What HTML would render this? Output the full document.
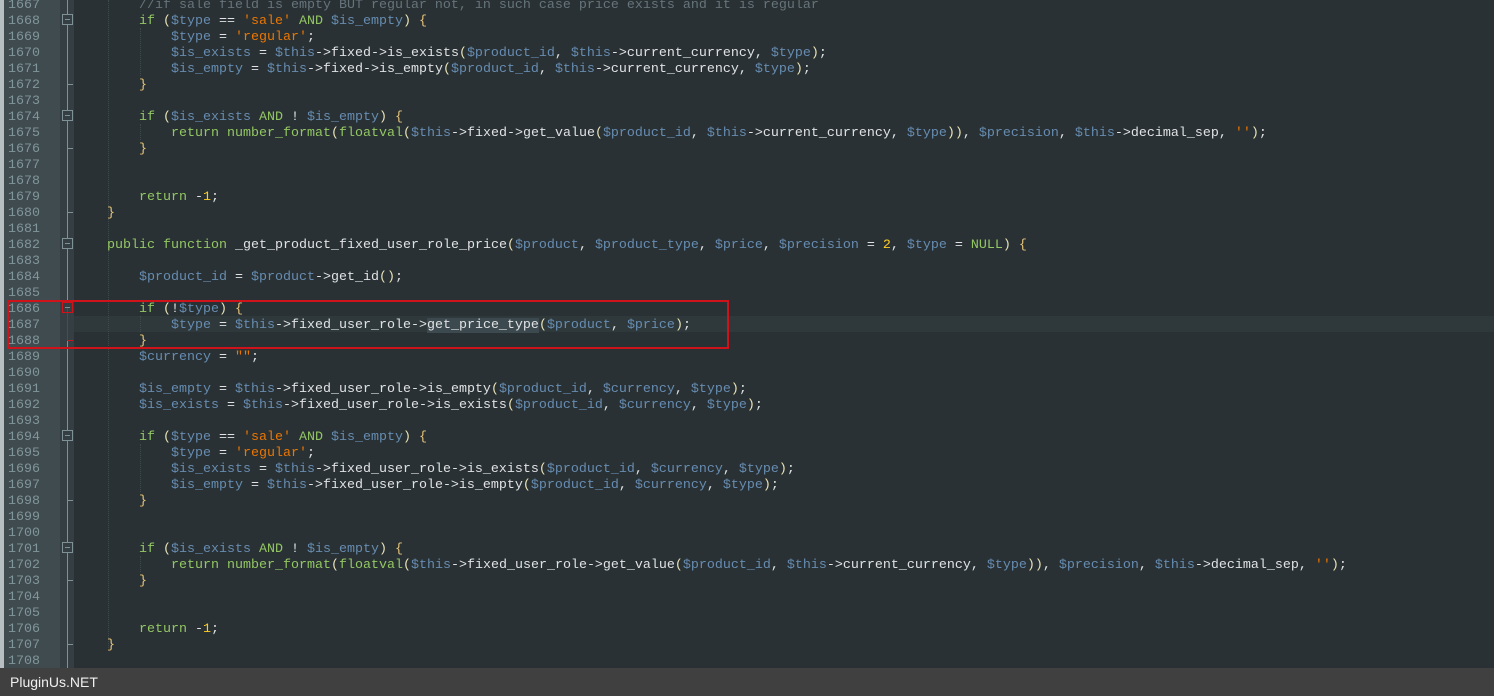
<!DOCTYPE html>
<html><head><meta charset="utf-8"><style>
html,body{margin:0;padding:0;width:1494px;height:696px;overflow:hidden;background:#293134;}
#g{position:absolute;left:0;top:0;width:60px;height:668px;background:#3f4b4f;}
#edge{position:absolute;left:0;top:0;width:4px;height:668px;background:#b8bfc2;}
#f{position:absolute;left:60px;top:0;width:14px;height:668px;background:#353f43;}
#fl{position:absolute;left:67px;top:0;width:1px;height:668px;background:#7d9196;}
.ln{position:absolute;left:8px;width:34px;height:16px;line-height:16px;margin-top:2px;font:13.33px "Liberation Mono",monospace;color:#81969a;}
.l{position:absolute;left:75px;height:16px;line-height:16px;margin-top:2px;font:13.33px "Liberation Mono",monospace;color:#e0e2e4;white-space:pre;}
.k{color:#93c763}.v{color:#678cb1}.s{color:#ec7600}.n{color:#ffcd22}.c{color:#66747b}.p{color:#e8e2b7}.b{color:#e8c47a}
.box{position:absolute;left:62px;width:9px;height:9px;border:1px solid #7d9196;background:#353f43;}
.box:after{content:"";position:absolute;left:2px;top:4px;width:5px;height:1px;background:#7d9196;}
.tk{position:absolute;left:67px;width:6px;height:1px;background:#7d9196;}
.guide{position:absolute;width:0;border-left:1px dotted #3e4a4e;}
#cur{position:absolute;left:74px;top:316px;width:1420px;height:16px;background:#2f393c;}
#red{position:absolute;left:7px;top:300px;width:718px;height:45px;border:2px solid #d0131a;}
#foot{position:absolute;left:0;top:668px;width:1494px;height:28px;background:#404040;color:#f0f0f0;font:14px "Liberation Sans",sans-serif;line-height:28px;padding-left:10px;box-sizing:border-box;}
.sel{background:#3c4a4f}
</style></head><body>
<div id="g"></div><div id="edge"></div><div id="f"></div><div id="fl"></div>
<div id="cur"></div>
<div class="guide" style="left:108px;top:0;height:648px"></div>
<div class="guide" style="left:140px;top:28px;height:48px"></div>
<div class="guide" style="left:140px;top:124px;height:16px"></div>
<div class="guide" style="left:140px;top:316px;height:16px"></div>
<div class="guide" style="left:140px;top:444px;height:48px"></div>
<div class="guide" style="left:140px;top:556px;height:16px"></div>
<div class="box" style="top:14px"></div>
<div class="box" style="top:110px"></div>
<div class="box" style="top:238px"></div>
<div class="box" style="top:302px;border-color:#d0131a"></div>
<div class="box" style="top:430px"></div>
<div class="box" style="top:542px"></div>
<div class="tk" style="top:84px"></div>
<div class="tk" style="top:148px"></div>
<div class="tk" style="top:212px"></div>
<div class="tk" style="top:340px;background:#d0131a"></div>
<div class="tk" style="top:500px"></div>
<div class="tk" style="top:580px"></div>
<div class="tk" style="top:644px"></div>
<div id="red"></div>
<div style="position:absolute;left:67px;top:308px;width:1px;height:32px;background:#d0131a"></div>

<div class="ln" style="top:-4px">1667</div><div class="l" style="top:-4px">        <span class="c">//if sale field is empty BUT regular not, in such case price exists and it is regular</span></div>
<div class="ln" style="top:12px">1668</div><div class="l" style="top:12px">        <span class="k">if</span> <span class="p">(</span><span class="v">$type</span> == <span class="s">'sale'</span> <span class="k">AND</span> <span class="v">$is_empty</span><span class="p">)</span> <span class="b">{</span></div>
<div class="ln" style="top:28px">1669</div><div class="l" style="top:28px">            <span class="v">$type</span> = <span class="s">'regular'</span>;</div>
<div class="ln" style="top:44px">1670</div><div class="l" style="top:44px">            <span class="v">$is_exists</span> = <span class="v">$this</span>->fixed->is_exists<span class="p">(</span><span class="v">$product_id</span>, <span class="v">$this</span>->current_currency, <span class="v">$type</span><span class="p">)</span>;</div>
<div class="ln" style="top:60px">1671</div><div class="l" style="top:60px">            <span class="v">$is_empty</span> = <span class="v">$this</span>->fixed->is_empty<span class="p">(</span><span class="v">$product_id</span>, <span class="v">$this</span>->current_currency, <span class="v">$type</span><span class="p">)</span>;</div>
<div class="ln" style="top:76px">1672</div><div class="l" style="top:76px">        <span class="b">}</span></div>
<div class="ln" style="top:92px">1673</div>
<div class="ln" style="top:108px">1674</div><div class="l" style="top:108px">        <span class="k">if</span> <span class="p">(</span><span class="v">$is_exists</span> <span class="k">AND</span> ! <span class="v">$is_empty</span><span class="p">)</span> <span class="b">{</span></div>
<div class="ln" style="top:124px">1675</div><div class="l" style="top:124px">            <span class="k">return</span> <span class="k">number_format</span><span class="p">(</span><span class="k">floatval</span><span class="p">(</span><span class="v">$this</span>->fixed->get_value<span class="p">(</span><span class="v">$product_id</span>, <span class="v">$this</span>->current_currency, <span class="v">$type</span><span class="p">))</span>, <span class="v">$precision</span>, <span class="v">$this</span>->decimal_sep, <span class="s">''</span><span class="p">)</span>;</div>
<div class="ln" style="top:140px">1676</div><div class="l" style="top:140px">        <span class="b">}</span></div>
<div class="ln" style="top:156px">1677</div>
<div class="ln" style="top:172px">1678</div>
<div class="ln" style="top:188px">1679</div><div class="l" style="top:188px">        <span class="k">return</span> -<span class="n">1</span>;</div>
<div class="ln" style="top:204px">1680</div><div class="l" style="top:204px">    <span class="b">}</span></div>
<div class="ln" style="top:220px">1681</div>
<div class="ln" style="top:236px">1682</div><div class="l" style="top:236px">    <span class="k">public</span> <span class="k">function</span> _get_product_fixed_user_role_price<span class="p">(</span><span class="v">$product</span>, <span class="v">$product_type</span>, <span class="v">$price</span>, <span class="v">$precision</span> = <span class="n">2</span>, <span class="v">$type</span> = <span class="k">NULL</span><span class="p">)</span> <span class="b">{</span></div>
<div class="ln" style="top:252px">1683</div>
<div class="ln" style="top:268px">1684</div><div class="l" style="top:268px">        <span class="v">$product_id</span> = <span class="v">$product</span>->get_id<span class="p">()</span>;</div>
<div class="ln" style="top:284px">1685</div>
<div class="ln" style="top:300px">1686</div><div class="l" style="top:300px">        <span class="k">if</span> <span class="p">(</span>!<span class="v">$type</span><span class="p">)</span> <span class="b">{</span></div>
<div class="ln" style="top:316px">1687</div><div class="l" style="top:316px">            <span class="v">$type</span> = <span class="v">$this</span>->fixed_user_role-><span class="sel">get_price_type</span><span class="p">(</span><span class="v">$product</span>, <span class="v">$price</span><span class="p">)</span>;</div>
<div class="ln" style="top:332px">1688</div><div class="l" style="top:332px">        <span class="b">}</span></div>
<div class="ln" style="top:348px">1689</div><div class="l" style="top:348px">        <span class="v">$currency</span> = <span class="s">""</span>;</div>
<div class="ln" style="top:364px">1690</div>
<div class="ln" style="top:380px">1691</div><div class="l" style="top:380px">        <span class="v">$is_empty</span> = <span class="v">$this</span>->fixed_user_role->is_empty<span class="p">(</span><span class="v">$product_id</span>, <span class="v">$currency</span>, <span class="v">$type</span><span class="p">)</span>;</div>
<div class="ln" style="top:396px">1692</div><div class="l" style="top:396px">        <span class="v">$is_exists</span> = <span class="v">$this</span>->fixed_user_role->is_exists<span class="p">(</span><span class="v">$product_id</span>, <span class="v">$currency</span>, <span class="v">$type</span><span class="p">)</span>;</div>
<div class="ln" style="top:412px">1693</div>
<div class="ln" style="top:428px">1694</div><div class="l" style="top:428px">        <span class="k">if</span> <span class="p">(</span><span class="v">$type</span> == <span class="s">'sale'</span> <span class="k">AND</span> <span class="v">$is_empty</span><span class="p">)</span> <span class="b">{</span></div>
<div class="ln" style="top:444px">1695</div><div class="l" style="top:444px">            <span class="v">$type</span> = <span class="s">'regular'</span>;</div>
<div class="ln" style="top:460px">1696</div><div class="l" style="top:460px">            <span class="v">$is_exists</span> = <span class="v">$this</span>->fixed_user_role->is_exists<span class="p">(</span><span class="v">$product_id</span>, <span class="v">$currency</span>, <span class="v">$type</span><span class="p">)</span>;</div>
<div class="ln" style="top:476px">1697</div><div class="l" style="top:476px">            <span class="v">$is_empty</span> = <span class="v">$this</span>->fixed_user_role->is_empty<span class="p">(</span><span class="v">$product_id</span>, <span class="v">$currency</span>, <span class="v">$type</span><span class="p">)</span>;</div>
<div class="ln" style="top:492px">1698</div><div class="l" style="top:492px">        <span class="b">}</span></div>
<div class="ln" style="top:508px">1699</div>
<div class="ln" style="top:524px">1700</div>
<div class="ln" style="top:540px">1701</div><div class="l" style="top:540px">        <span class="k">if</span> <span class="p">(</span><span class="v">$is_exists</span> <span class="k">AND</span> ! <span class="v">$is_empty</span><span class="p">)</span> <span class="b">{</span></div>
<div class="ln" style="top:556px">1702</div><div class="l" style="top:556px">            <span class="k">return</span> <span class="k">number_format</span><span class="p">(</span><span class="k">floatval</span><span class="p">(</span><span class="v">$this</span>->fixed_user_role->get_value<span class="p">(</span><span class="v">$product_id</span>, <span class="v">$this</span>->current_currency, <span class="v">$type</span><span class="p">))</span>, <span class="v">$precision</span>, <span class="v">$this</span>->decimal_sep, <span class="s">''</span><span class="p">)</span>;</div>
<div class="ln" style="top:572px">1703</div><div class="l" style="top:572px">        <span class="b">}</span></div>
<div class="ln" style="top:588px">1704</div>
<div class="ln" style="top:604px">1705</div>
<div class="ln" style="top:620px">1706</div><div class="l" style="top:620px">        <span class="k">return</span> -<span class="n">1</span>;</div>
<div class="ln" style="top:636px">1707</div><div class="l" style="top:636px">    <span class="b">}</span></div>
<div class="ln" style="top:652px">1708</div>
<div id="foot">PluginUs.NET</div>
</body></html>
